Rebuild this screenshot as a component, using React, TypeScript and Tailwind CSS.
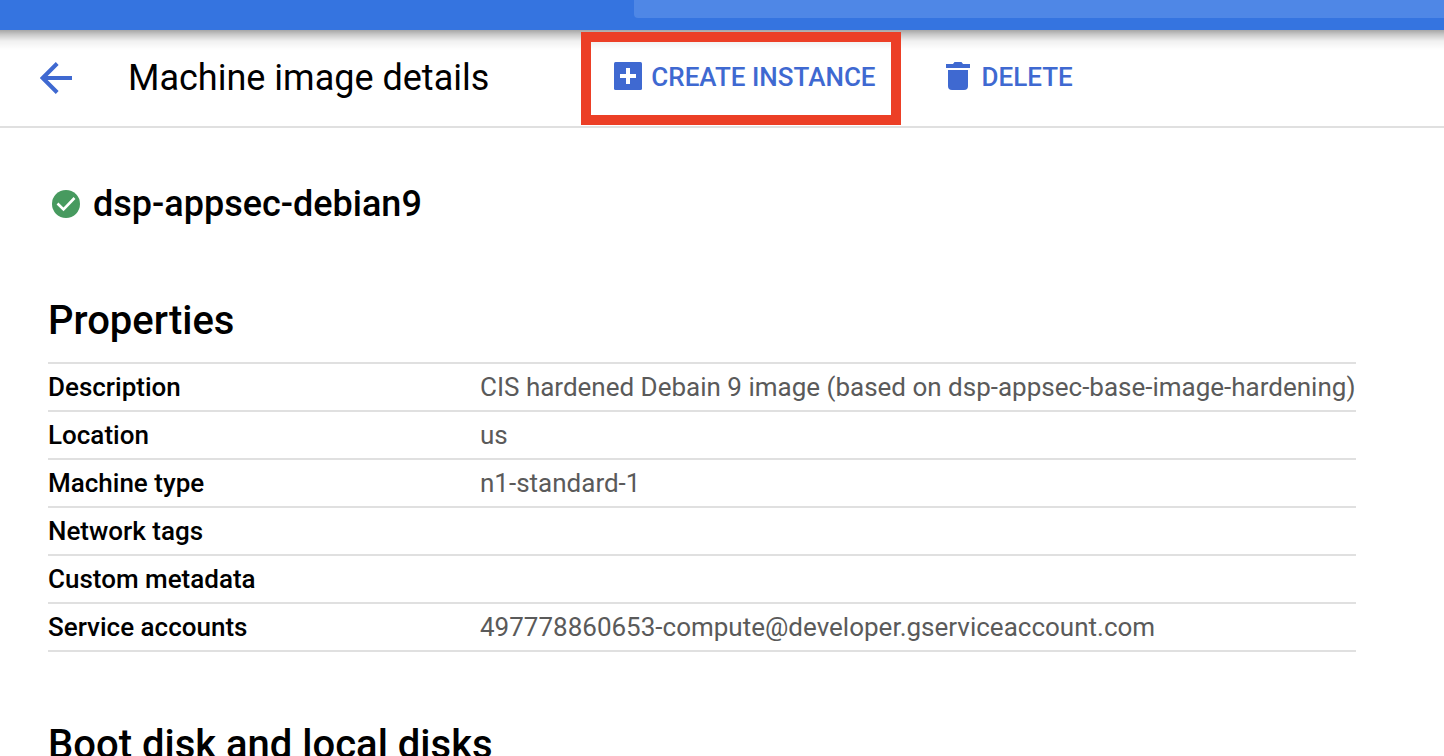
import React from "react";

const properties: { label: string; value: string }[] = [
  {
    label: "Description",
    value: "CIS hardened Debain 9 image (based on dsp-appsec-base-image-hardening)",
  },
  { label: "Location", value: "us" },
  { label: "Machine type", value: "n1-standard-1" },
  { label: "Network tags", value: "" },
  { label: "Custom metadata", value: "" },
  { label: "Service accounts", value: "497778860653-compute@developer.gserviceaccount.com" },
];

function BackIcon() {
  return (
    <svg width="32" height="32" viewBox="0 0 32 32" fill="none" stroke="currentColor" strokeWidth="4" aria-hidden="true">
      <path d="M32 16H4M17.200 1.500L2.700 16L17.200 30.500" />
    </svg>
  );
}

function AddBoxIcon() {
  return (
    <svg width="28" height="28" viewBox="0 0 28 28" aria-hidden="true">
      <rect width="28" height="28" rx="1.500" fill="currentColor" />
      <path d="M12 6h4v6h6v4h-6v6h-4v-6H6v-4h6z" fill="#fff" />
    </svg>
  );
}

function TrashIcon() {
  return (
    <svg width="24" height="28" viewBox="0 0 24 28" fill="currentColor" aria-hidden="true">
      <path d="M0 2h7l1.500-2h7L17 2h7v4H0z" />
      <path d="M2 8h20v16a4 4 0 0 1-4 4H6a4 4 0 0 1-4-4z" />
    </svg>
  );
}

function CheckIcon() {
  return (
    <svg width="28" height="28" viewBox="0 0 28 28" aria-hidden="true">
      <circle cx="14" cy="14" r="14" fill="#479a5f" />
      <path d="M5.500 13.500L11.500 19.500L22.500 8" fill="none" stroke="#fff" strokeWidth="2.600" />
    </svg>
  );
}

function TopBar() {
  return (
    <div className="relative flex h-[30px] justify-end bg-[#3574e0]">
      <div className="h-[18px] w-[810px] max-w-full rounded-bl bg-[#4f87e6]" />
      <div className="pointer-events-none absolute inset-x-0 top-full h-5 bg-[linear-gradient(to_bottom,rgba(0,0,0,0.35),rgba(0,0,0,0.2)_25%,rgba(0,0,0,0.06)_55%,transparent)]" />
    </div>
  );
}

function Toolbar() {
  return (
    <header className="flex h-[98px] items-center border-b-2 border-[#e0e0e0] pl-10 text-[#3f69d1]">
      <button type="button" aria-label="Back" className="mr-14 shrink-0">
        <BackIcon />
      </button>
      <h1 className="mr-[92px] text-4xl whitespace-nowrap">
        <span className="text-black">Machine image details</span>
      </h1>
      <button
        type="button"
        className="relative flex h-[93px] shrink-0 items-center gap-[9px] border-[10px] border-[#ec3f26] pr-[15px] pb-1 pl-[23px] text-[26px] font-medium whitespace-nowrap"
      >
        <AddBoxIcon />
        <span className="pt-0.5">CREATE INSTANCE</span>
      </button>
      <button type="button" className="ml-[45px] flex h-[93px] items-center gap-3 pb-1 text-[26px] font-medium">
        <TrashIcon />
        <span className="pt-0.5">DELETE</span>
      </button>
    </header>
  );
}

export default function App() {
  return (
    <div className="min-h-screen bg-white font-['Roboto',sans-serif] text-black">
      <TopBar />
      <Toolbar />
      <main className="pr-[88px] pl-12">
        <div className="flex items-center gap-[13px] pt-[52px] pl-1">
          <CheckIcon />
          <h2 className="text-4xl leading-12 font-medium">dsp-appsec-debian9</h2>
        </div>
        <section className="pt-[67px]">
          <h3 className="pb-[15px] text-[40px] leading-[52px] font-medium">Properties</h3>
          <table className="w-full border-t-2 border-[#e0e0e0] text-left text-[26px] leading-[46px]">
            <tbody>
              {properties.map(({ label, value }) => (
                <tr key={label} className="border-b-2 border-[#e0e0e0]">
                  <th scope="row" className="w-[432px] p-0 font-medium">
                    {label}
                  </th>
                  <td className="p-0 whitespace-nowrap text-[#5a5a5a]">{value}</td>
                </tr>
              ))}
            </tbody>
          </table>
        </section>
        <section className="pt-[67px]">
          <h3 className="text-[40px] leading-[52px] font-medium">Boot disk and local disks</h3>
        </section>
      </main>
    </div>
  );
}
